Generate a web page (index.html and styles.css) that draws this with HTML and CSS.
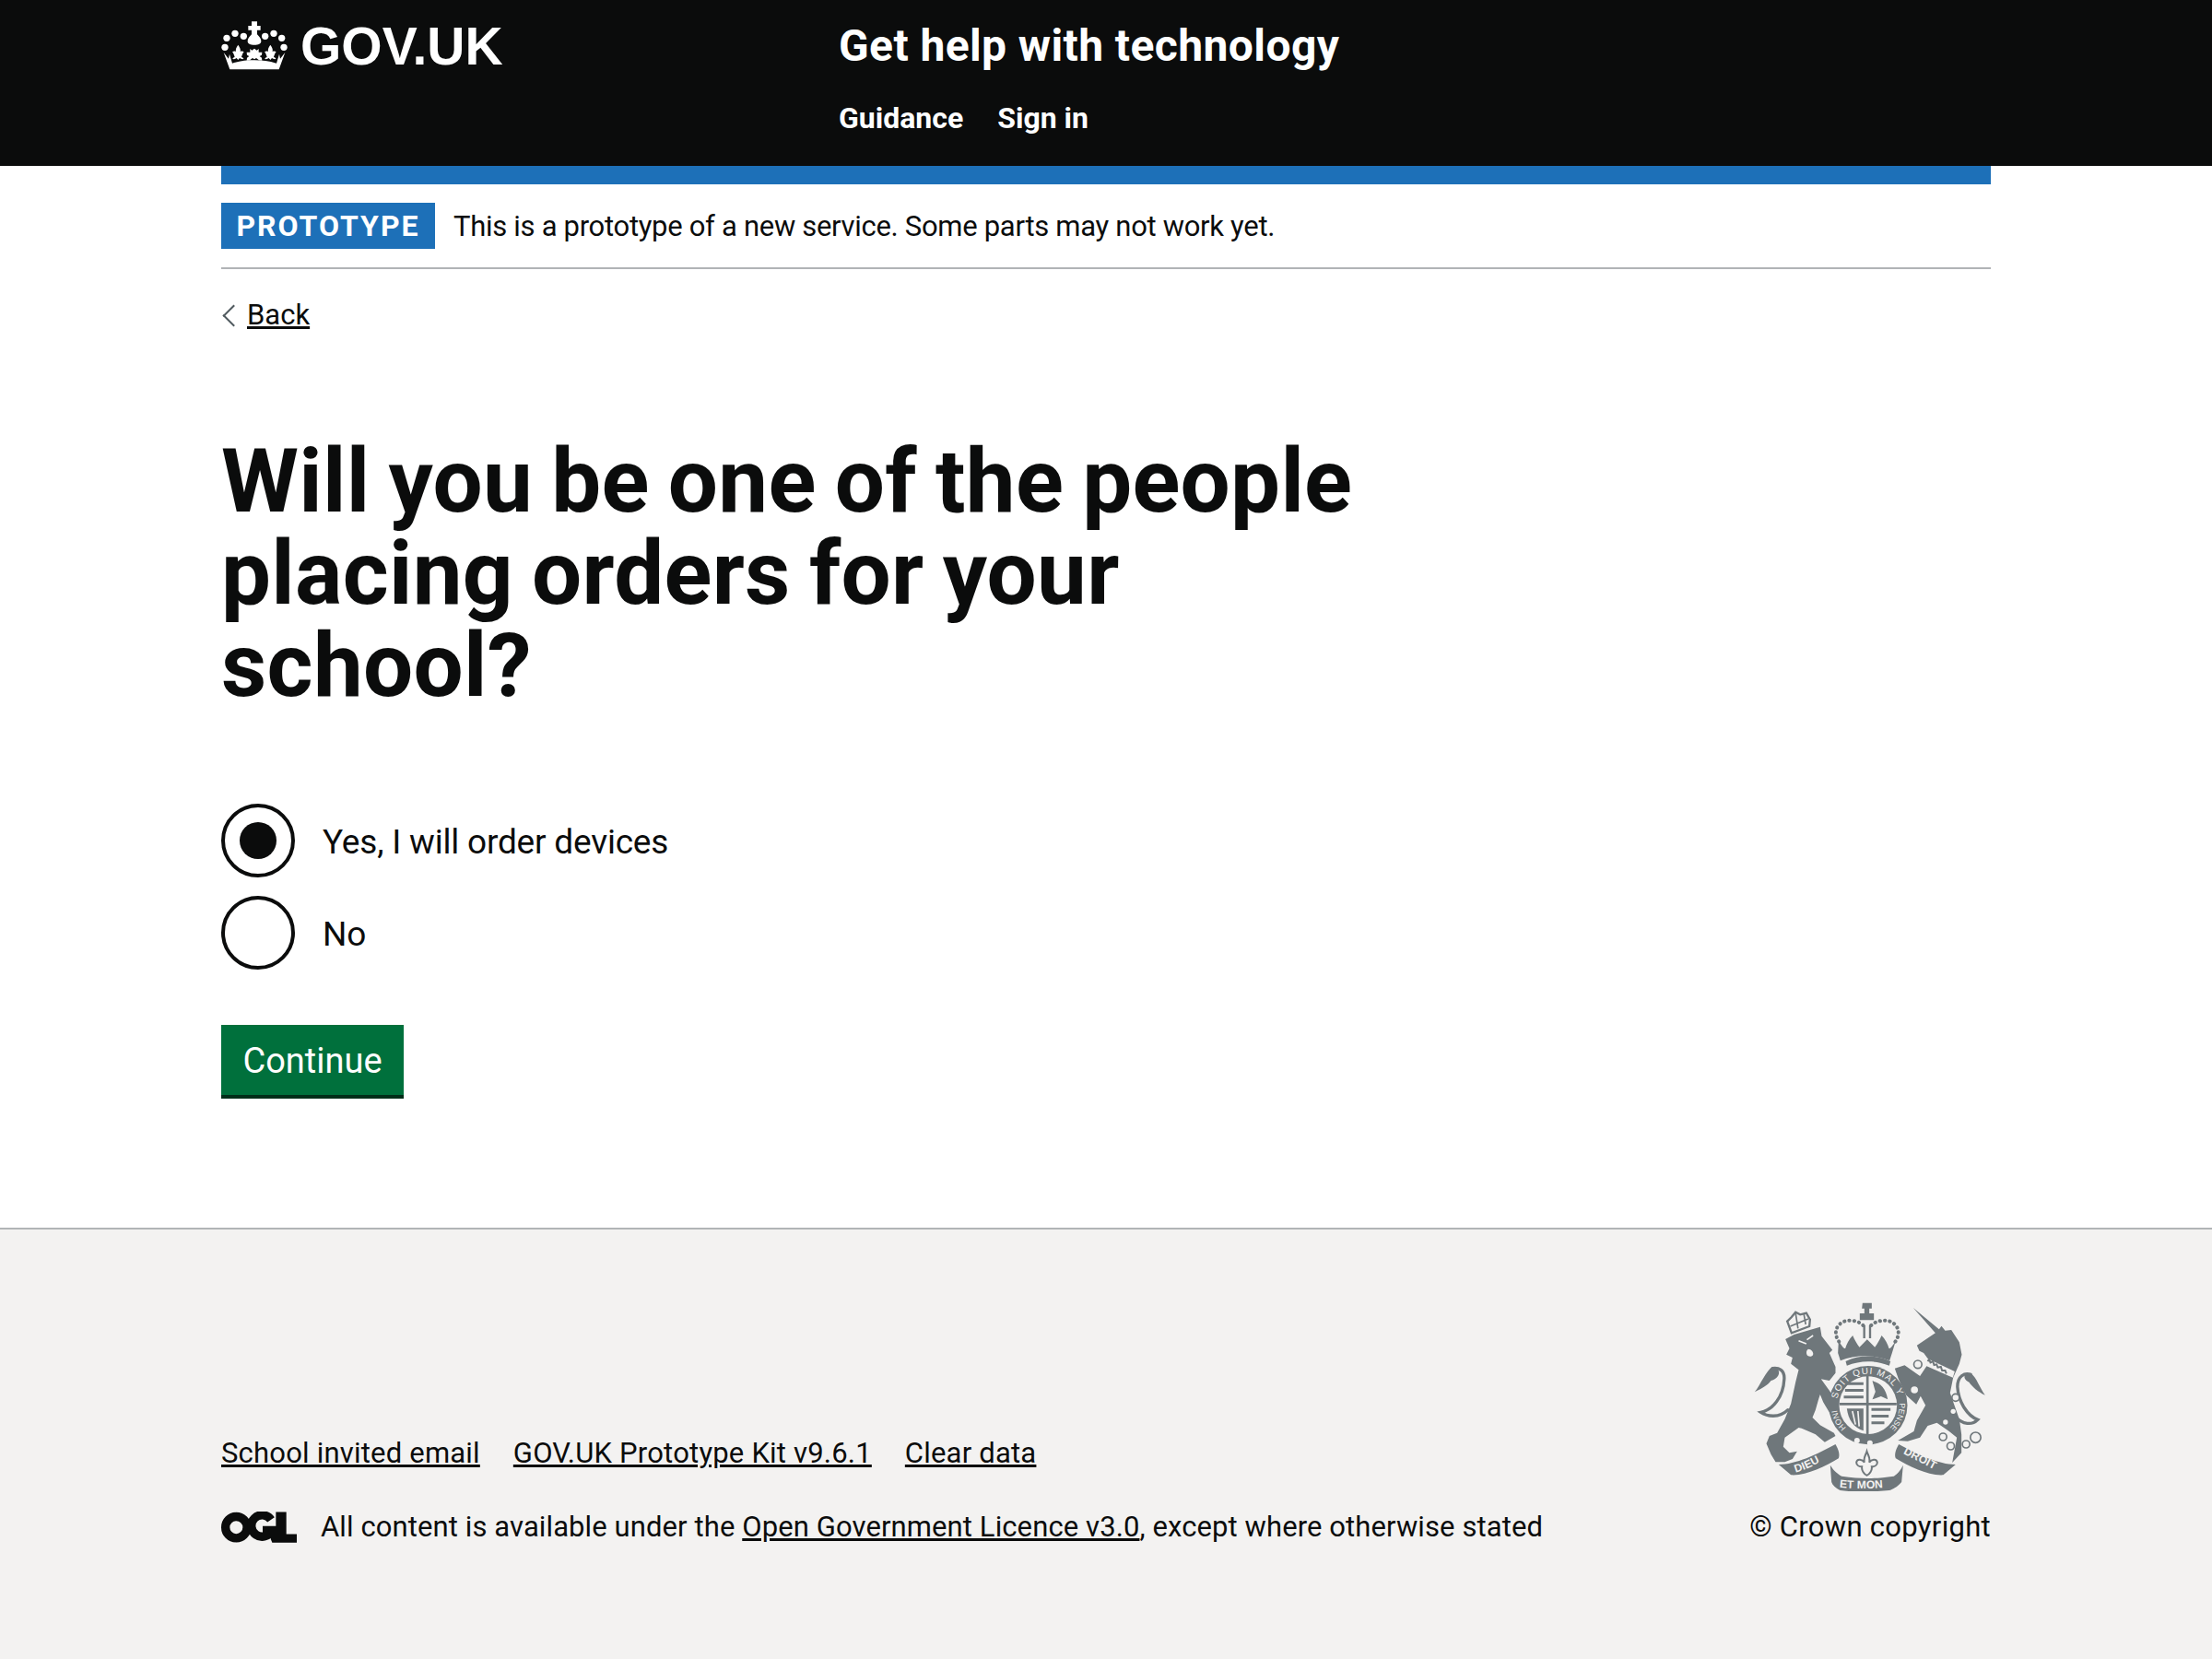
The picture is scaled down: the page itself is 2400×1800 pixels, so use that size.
FILE: index.html
```html
<!DOCTYPE html>
<html lang="en">
<head>
  <meta charset="UTF-8" />
  <title>Will you be one of the people placing orders for your school? - Get help with technology</title>
  <link rel="stylesheet" href="styles.css">
</head>
<body>

  <!-- HEADER -->
  <header class="header">
    <div class="wrap header-row">
      <a class="logo" href="#">
        <svg class="crown" viewBox="60 60 216 162" aria-hidden="true">
          <g fill="#fff">
            <circle cx="72" cy="148" r="11"/><circle cx="78" cy="118" r="11"/><circle cx="105" cy="103" r="11"/><circle cx="133" cy="112" r="11"/>
            <circle cx="203" cy="112" r="11"/><circle cx="231" cy="103" r="11"/><circle cx="257" cy="118" r="11"/><circle cx="264" cy="148" r="11"/>
            <path d="M159 64h18v14h11v14h-11v14c8 8 13 15 13 22 0 8-9 12-22 12s-22-4-22-12c0-7 5-14 13-22V92h-11V78h11z"/>
            <path d="M168 152l8 6 6-5v11h11l-1 9-7 4 7 5 1 9-11-1v-1l-8-6-6 4-6-4-8 6v1l-11 1 1-9 7-5-7-4-1-9h11v-11l6 5z"/>
            <path d="M115 140c5 8 9 13 7 22 4-2 8-2 12 1-4 3-6 11-8 17 4 1 6 3 7 6-5 1-9 0-13-3l-5 6-5-6c-4 3-8 4-13 3 1-3 3-5 7-6-2-6-4-14-8-17 4-3 8-3 12-1-2-9 2-14 7-22z"/>
            <path d="M220 140c5 8 9 13 7 22 4-2 8-2 12 1-4 3-6 11-8 17 4 1 6 3 7 6-5 1-9 0-13-3l-5 6-5-6c-4 3-8 4-13 3 1-3 3-5 7-6-2-6-4-14-8-17 4-3 8-3 12-1-2-9 2-14 7-22z"/>
            <path d="M68 165l16 20 3-15 6 20 3 10c24-8 48-10 72-10s48 2 72 10l3-10 6-20 3 15 16-20-20 55H88z"/>
          </g>
        </svg>
        <span class="logo-text">GOV.UK</span>
      </a>
      <div class="service">
        <a class="service-name" href="#">Get help with technology</a>
        <nav class="service-nav">
          <a href="#">Guidance</a>
          <a href="#">Sign in</a>
        </nav>
      </div>
    </div>
  </header>

  <div class="wrap">
    <div class="phase">
      <strong class="tag">PROTOTYPE</strong>
      <span>This is a prototype of a new service. Some parts may not work yet.</span>
    </div>

    <a class="back" href="#">Back</a>

    <main class="main">
      <h1>Will you be one of the people placing orders for your school?</h1>

      <div class="radios">
        <label class="radio">
          <span class="radio-mark checked"></span>
          <span class="radio-text">Yes, I will order devices</span>
        </label>
        <label class="radio">
          <span class="radio-mark"></span>
          <span class="radio-text">No</span>
        </label>
      </div>

      <button class="btn">Continue</button>
    </main>
  </div>

  <!-- FOOTER -->
  <footer class="footer">
    <div class="wrap footer-row">
      <div class="footer-left">
        <ul class="footer-links">
          <li><a href="#">School invited email</a></li>
          <li><a href="#">GOV.UK Prototype Kit v9.6.1</a></li>
          <li><a href="#">Clear data</a></li>
        </ul>
        <div class="licence">
          <svg class="ogl" viewBox="60 294 246 101" aria-hidden="true">
            <g fill="none" stroke="#0b0c0c" stroke-width="28">
              <circle cx="109" cy="345" r="35"/>
              <path d="M222 320a35 35 0 1 0 3 35h-30"/>
            </g>
            <path fill="#0b0c0c" d="M238 295h34v72h34v28h-68zM212 345h28v50h-14l-4-10z"/>
          </svg>
          <span>All content is available under the <a href="#">Open Government Licence v3.0</a>, except where otherwise stated</span>
        </div>
      </div>
      <div class="copyright">
        <svg class="crest" viewBox="70 70 755 615" aria-hidden="true">
          <defs>
            <path id="garterTop" d="M341 385A102 102 0 0 1 541 385"/>
            <path id="garterLeft" d="M370 478A102 102 0 0 1 339 395"/>
            <path id="garterRight" d="M543 398A102 102 0 0 1 505 484"/>
            <path id="ribLeft" d="M205 624C240 614 280 595 316 570"/>
            <path id="ribMid" d="M348 672C400 678 480 678 527 668"/>
            <path id="ribRight" d="M555 562C590 580 640 605 680 628"/>
          </defs>
          <g fill="#6f777b">
            <!-- lion -->
            <path d="M172 190L200 175 285 150 290 180 325 225 315 235 335 280 335 300 315 325 288 320 335 385 345 425 322 440 295 395 285 370 280 385 270 420 260 445 285 470 330 495 335 505 300 525 270 500 225 480 215 478 170 510 165 540 185 560 210 555 195 580 170 590 140 590 125 565 110 530 120 505 145 495 170 450 190 400 205 330 215 290 190 270 195 250 175 240 185 220z"/>
            <path d="M130 280C110 290 90 340 72 362 95 350 115 340 125 325 145 320 160 300 145 285z"/>
            <!-- unicorn -->
            <path d="M600 210L660 170 588 88 672 158 680 147 692 162 712 160 738 200 746 240 738 270 718 315 708 365 722 405 738 450 745 500 745 560 715 592 730 510 705 490 665 462 635 472 610 510 570 522 538 520 590 490 600 455 628 405 612 375 598 402 565 372 540 320 528 285 560 275 610 310 642 262 622 235 608 228z"/>
            <path d="M775 300C795 315 805 350 822 372 800 362 780 345 770 330 755 325 750 310 760 302z"/>
            <!-- crown -->
            <path d="M423 72h30v18h-8v16h15v22h-46v-22h15V90h-8z"/>
            <path d="M425 145h7v42h-7zM444 145h7v42h-7z"/>
            <path d="M345 195c10 15 15 25 22 25 3-12 12-30 24-42 6 14 14 28 22 38l25-25 25 25c8-10 16-24 22-38 12 12 21 30 24 42 7 0 12-10 22-25l-12 40-8 25c-50-20-110-20-160 0l-8-25z"/>
            <path d="M368 262c45-22 100-22 146 0l-4 14c-45-18-93-18-138 0z"/>
          </g>
          <g fill="none" stroke="#6f777b" stroke-width="10" stroke-linecap="round">
            <path stroke-dasharray="1 15" stroke-width="12" d="M425 145c-20-20-60-20-75-5-18 15-18 40-2 60"/>
            <path stroke-dasharray="1 15" stroke-width="12" d="M451 145c20-20 60-20 75-5 18 15 18 40 2 60"/>
            <path d="M180 420C150 450 110 440 92 428 130 420 165 380 168 320 170 290 150 282 130 285"/>
            <path d="M722 440C750 470 780 470 798 452 765 440 735 395 732 345 732 310 755 298 775 305"/>
          </g>
          <!-- lion crown and face -->
          <path d="M178 132L192 118 205 102 220 110 240 105 252 126 250 148 192 170z" fill="#f3f2f1" stroke="#6f777b" stroke-width="7"/>
          <path d="M188 148l58-24M205 105l8 50M232 108l6 34" fill="none" stroke="#6f777b" stroke-width="5"/>
          <path d="M215 195l25 10M262 178l-20 14" fill="none" stroke="#f3f2f1" stroke-width="5"/>
          <path d="M246 222c10 0 18 10 16 18-3 8-16 8-20 1-3-8-2-14 4-19z" fill="#f3f2f1"/>
          <!-- garter and shield -->
          <circle cx="441" cy="405" r="128" fill="#6f777b"/>
          <circle cx="441" cy="405" r="94" fill="#f3f2f1"/>
          <path d="M435 306h8v196h-8zM348 397h186v8H348z" fill="#6f777b"/>
          <g fill="#6f777b">
            <path d="M372 330h54v9h-54zM366 352h60v9h-60zM362 374h64v9h-64zM452 414h62v9h-62zM452 436h56v9h-56zM452 458h42v9h-42z"/>
            <path d="M455 326c25 5 45 25 50 60l-22-10-28 10 10-25z"/>
            <path d="M372 416h54v72c-30-8-50-36-54-72z"/>
          </g>
          <path d="M390 424l10 44M408 424l4 50" fill="none" stroke="#f3f2f1" stroke-width="5"/>
          <circle cx="405" cy="520" r="9" fill="#f3f2f1"/>
          <circle cx="447" cy="528" r="9" fill="#f3f2f1"/>
          <text class="crest-text crest-wide" fill="#f3f2f1"><textPath href="#garterTop">SOIT QUI MAL Y</textPath></text>
          <text class="crest-small" fill="#f3f2f1"><textPath href="#garterLeft">HONI</textPath></text>
          <text class="crest-small" fill="#f3f2f1"><textPath href="#garterRight">PENSE</textPath></text>
          <!-- ribbon -->
          <g fill="#6f777b">
            <path d="M150 598C205 598 275 565 335 532 345 550 350 565 345 578 300 605 240 635 190 632z"/>
            <path d="M726 598C671 598 601 565 541 532 531 550 526 565 531 578 576 605 636 635 686 632z"/>
            <path d="M318 600C330 620 345 630 355 636 420 645 460 645 525 636 535 630 548 615 555 600L550 655C535 672 520 680 510 682 450 688 390 688 350 682 335 675 325 665 322 655z"/>
          </g>
          <path d="M437 555c4 14 12 20 8 36 6-10 24-14 26 0 0 10-10 14-18 14 2 12-8 26-16 28-8-2-18-16-16-28-8 0-18-4-18-14 2-14 20-10 26 0-4-16 4-22 8-36z" fill="#f3f2f1" stroke="#6f777b" stroke-width="6"/>
          <text class="crest-ribbon" fill="#f3f2f1"><textPath href="#ribLeft">DIEU</textPath></text>
          <text class="crest-ribbon" fill="#f3f2f1"><textPath href="#ribMid">ET MON</textPath></text>
          <text class="crest-ribbon" fill="#f3f2f1"><textPath href="#ribRight">DROIT</textPath></text>
          <!-- spots -->
          <g fill="#f3f2f1" stroke="#6f777b" stroke-width="5">
            <circle cx="603" cy="272" r="13"/><circle cx="592" cy="355" r="14"/><circle cx="726" cy="380" r="12"/>
            <circle cx="685" cy="508" r="12"/><circle cx="710" cy="538" r="12"/><circle cx="760" cy="532" r="12"/><circle cx="791" cy="510" r="17"/>
          </g>
          <circle cx="693" cy="460" r="8" fill="#f3f2f1"/><circle cx="718" cy="425" r="8" fill="#f3f2f1"/>
          <path d="M628 250l95 45-6 20-92-40z" fill="#f3f2f1"/>
          <path d="M635 262l5-6 4 10 8-4 4 12 8-2 4 10 10-2 4 12 10 0 4 10" fill="none" stroke="#6f777b" stroke-width="6"/>
        </svg>
        <a href="#">© Crown copyright</a>
      </div>
    </div>
  </footer>

</body>
</html>
```

FILE: styles.css
```css
* {
  box-sizing: border-box;
}
body {
  font-family: Roboto, Arial, sans-serif;
  color: #0b0c0c;
  background: white;
  margin: 0;
  min-height: 1800px;
  display: flex;
  flex-direction: column;
}
a {
  color: #0b0c0c;
}
.wrap {
  width: 1920px;
  margin: 0 auto;
}

/* header */
.header {
  background: #0b0c0c;
  height: 180px;
}
.header-row {
  display: flex;
}
.logo {
  width: 670px;
  height: 100px;
  display: flex;
  align-items: flex-start;
  gap: 14px;
  padding-top: 22px;
  color: white;
  text-decoration: none;
}
.crown {
  width: 72px;
  height: 54px;
}
.logo-text {
  font-family: "Liberation Sans", Arial, sans-serif;
  font-weight: bold;
  font-size: 57px;
  line-height: 56px;
}
.service-name {
  display: block;
  margin-top: 22px;
  font-size: 48px;
  line-height: 56px;
  font-weight: bold;
  letter-spacing: 0.4px;
  color: white;
  text-decoration: none;
}
.service-nav {
  display: flex;
  gap: 37px;
  margin-top: 30px;
}
.service-nav a {
  font-size: 32px;
  line-height: 40px;
  font-weight: bold;
  color: white;
  text-decoration: none;
}

/* phase banner */
.phase {
  border-top: 20px solid #1d70b8;
  border-bottom: 2px solid #b1b4b6;
  height: 112px;
  padding-top: 20px;
  display: flex;
  align-items: flex-start;
  gap: 20px;
  font-size: 31px;
  line-height: 52px;
  letter-spacing: -0.3px;
}
.tag {
  width: 232px;
  height: 50px;
  background: #1d70b8;
  color: white;
  text-align: center;
  font-size: 32px;
  line-height: 50px;
  letter-spacing: 2px;
}
.back {
  display: inline-block;
  margin-top: 30px;
  padding-left: 28px;
  font-size: 31px;
  line-height: 40px;
  position: relative;
}
.back::before {
  content: "";
  position: absolute;
  left: 5px;
  top: 12px;
  width: 15px;
  height: 15px;
  border-left: 2px solid #505a5f;
  border-bottom: 2px solid #505a5f;
  transform: rotate(45deg);
}

/* question */
.main {
  padding-top: 110px;
}
h1 {
  width: 1280px;
  margin: 0 0 100px;
  font-size: 96px;
  line-height: 100px;
  font-weight: bold;
  letter-spacing: 0.3px;
  word-spacing: -4px;
}
.radios {
  display: flex;
  flex-direction: column;
  gap: 20px;
}
.radio {
  display: flex;
  align-items: center;
  gap: 30px;
  height: 80px;
  font-size: 37px;
  letter-spacing: -0.2px;
}
.radio-text {
  padding-top: 2px;
}
.radio-mark {
  width: 80px;
  height: 80px;
  border: 4px solid #0b0c0c;
  border-radius: 50%;
  display: flex;
  align-items: center;
  justify-content: center;
}
.radio-mark.checked::after {
  content: "";
  width: 40px;
  height: 40px;
  border-radius: 50%;
  background: #0b0c0c;
}
.btn {
  display: block;
  margin-top: 60px;
  width: 198px;
  height: 80px;
  border: none;
  border-bottom: 4px solid #002d18;
  background-color: #00703c;
  color: white;
  font-family: inherit;
  font-size: 38px;
  padding: 2px 0 0;
  cursor: pointer;
}

/* footer */
.footer {
  margin-top: 140px;
  flex: 1;
  background: #f3f2f1;
  border-top: 2px solid #b1b4b6;
}
.footer-row {
  display: flex;
  justify-content: space-between;
  align-items: flex-end;
  padding-top: 79px;
  font-size: 31px;
  line-height: 40px;
  letter-spacing: 0.1px;
}
.footer-links {
  list-style: none;
  display: flex;
  gap: 36px;
  margin: 0 0 40px;
  padding: 0;
  letter-spacing: 0.2px;
}
.licence {
  display: flex;
  align-items: center;
  gap: 26px;
}
.ogl {
  width: 82px;
  height: 34px;
}
.copyright {
  display: flex;
  flex-direction: column;
  align-items: center;
  letter-spacing: 0.3px;
}
.copyright a {
  text-decoration: none;
}
.crest {
  width: 252px;
  height: 205px;
  margin-bottom: 19px;
}
.crest-text {
  font-family: "Liberation Sans", Arial, sans-serif;
  font-size: 30px;
}
.crest-wide {
  letter-spacing: 3px;
}
.crest-small {
  font-family: "Liberation Sans", Arial, sans-serif;
  font-size: 26px;
}
.crest-ribbon {
  font-family: "Liberation Sans", Arial, sans-serif;
  font-size: 36px;
  font-weight: bold;
}
```
